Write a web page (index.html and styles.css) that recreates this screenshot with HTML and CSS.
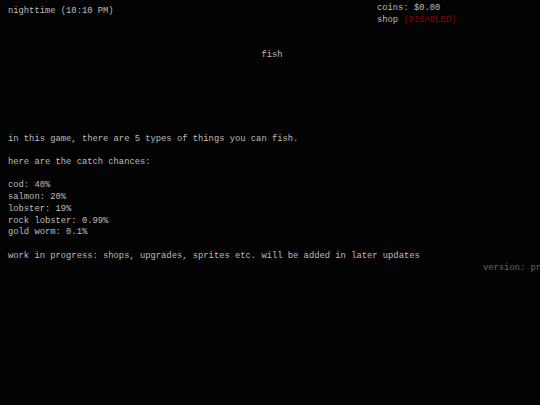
FILE: index.html
```html
<!DOCTYPE html>
<html>
<head>
<meta charset="utf-8">
<link rel="stylesheet" href="styles.css">
</head>
<body>
<div class="page">
  <header class="top">
    <div class="time">nighttime (10:10 PM)</div>
    <div class="stats">
      <div>coins: $0.00</div>
      <div>shop <span class="disabled">(DISABLED)</span></div>
    </div>
  </header>
  <div class="title">fish</div>
  <main class="info">
    <p class="para">in this game, there are 5 types of things you can fish.</p>
    <p class="para">here are the catch chances:</p>
    <ul class="chances">
      <li>cod: 40%</li>
      <li>salmon: 20%</li>
      <li>lobster: 19%</li>
      <li>rock lobster: 0.99%</li>
      <li>gold worm: 0.1%</li>
    </ul>
    <p class="para wip">work in progress: shops, upgrades, sprites etc. will be added in later updates</p>
    <div class="version">version: pre-alpha</div>
  </main>
</div>
</body>
</html>
```
FILE: styles.css
```css
html, body {
  margin: 0;
  padding: 0;
  background: #030303;
  overflow: hidden;
}
body {
  width: 540px;
  height: 405px;
  font-family: "Liberation Mono", "DejaVu Sans Mono", monospace;
  font-size: 8.8px;
  line-height: 11.75px;
  color: #bdbdbd;
}
.page {
  padding: 3px 0 0 8px;
}
.top {
  display: flex;
  justify-content: space-between;
  height: 25px;
}
.time {
  padding-top: 3px;
}
.stats {
  width: 163px;
}
.disabled {
  color: #8b0000;
}
.title {
  margin-top: 22px;
  text-align: center;
  padding-right: 4px;
}
.info {
  margin-top: 72px;
}
.para {
  margin: 0 0 11.5px 0;
}
.chances {
  list-style: none;
  margin: 0 0 12px 0;
  padding: 0;
}
.wip {
  margin: 0;
}
.version {
  padding-left: 475px;
  white-space: nowrap;
  overflow: hidden;
  color: #666666;
}
```
